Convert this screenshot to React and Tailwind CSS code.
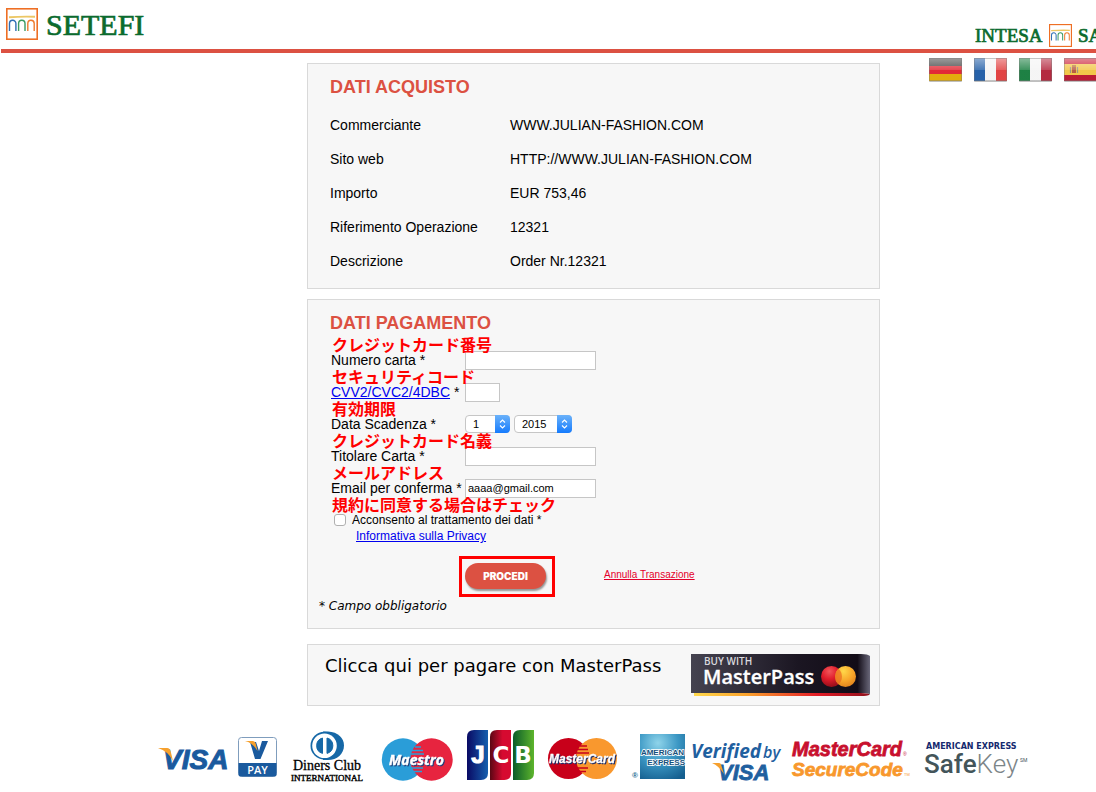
import React, { useState } from 'react';

const PURCHASE = [
  { label: 'Commerciante', value: 'WWW.JULIAN-FASHION.COM' },
  { label: 'Sito web', value: 'HTTP://WWW.JULIAN-FASHION.COM' },
  { label: 'Importo', value: 'EUR 753,46' },
  { label: 'Riferimento Operazione', value: '12321' },
  { label: 'Descrizione', value: 'Order Nr.12321' },
];

const MONTHS = ['1', '2', '3', '4', '5', '6', '7', '8', '9', '10', '11', '12'];
const YEARS = ['2015', '2016', '2017', '2018', '2019', '2020'];

const BridgeMark = ({ className }) => (
  <svg viewBox="0 0 32 32" className={className} fill="none" aria-hidden="true">
    <rect x="0.8" y="0.8" width="30.4" height="30.4" fill="#fff" stroke="#ee6f24" strokeWidth="1.6" />
    <path d="M3 9.2 Q16 8.4 29 8.8" stroke="#ecc765" strokeWidth="1.9" />
    <path d="M3.500 23 V15.500 A3.200 3.200 0 0 1 9.900 15.500 V23" stroke="#2f6fb5" strokeWidth="1.4" />
    <path d="M12.600 23 V15.500 A3.200 3.200 0 0 1 19 15.500 V23" stroke="#3d9a63" strokeWidth="1.4" />
    <path d="M21.800 23 V15.500 A3.200 3.200 0 0 1 28.200 15.500 V23" stroke="#ee7b2e" strokeWidth="1.4" />
  </svg>
);

const Flag = ({ name, stripes, vertical, children }) => (
  <a href="#" aria-label={name}>
    <svg width="33" height="24" viewBox="0 0 33 24" className="block">
      <defs>
        <linearGradient id={`gloss-${name}`} x1="0" y1="0" x2="0" y2="1">
          <stop offset="0" stopColor="#fff" stopOpacity="0.5" />
          <stop offset="0.5" stopColor="#fff" stopOpacity="0.2" />
          <stop offset="0.52" stopColor="#fff" stopOpacity="0.05" />
        </linearGradient>
      </defs>
      <rect x="0" y="1" width="33" height="23" rx="1" fill="#000" opacity="0.25" />
      {stripes.map((color, i) =>
        vertical ? (
          <rect key={i} x={i * 11} y="0" width="11" height="23" fill={color} />
        ) : (
          <rect key={i} x="0" y={i === 0 ? 0 : i === 1 ? 8 : 16} width="33" height={i === 2 ? 7 : 8} fill={color} />
        )
      )}
      {children}
      <rect width="33" height="23" fill={`url(#gloss-${name})`} />
      <rect x="0.5" y="0.5" width="32" height="22" fill="none" stroke="#777" strokeOpacity="0.4" />
    </svg>
  </a>
);

const Header = () => (
  <header>
    <div className="flex h-[49px] items-start justify-between pl-1.5 pr-3">
      <div className="flex items-center gap-2 pt-2">
        <BridgeMark className="size-8" />
        <svg width="108" height="32" viewBox="0 0 108 32" fill="#0b6b2e" stroke="#0b6b2e" strokeWidth="0.7" className="font-['Liberation_Serif',serif]">
          <text x="0" y="27" fontSize="30">SETEFI</text>
        </svg>
      </div>
      <div className="flex items-center gap-1.5 pt-6">
        <svg width="68" height="22" viewBox="0 0 68 22" fill="#0b6b2e" stroke="#0b6b2e" strokeWidth="0.7" className="font-['Liberation_Serif',serif]">
          <text x="0" y="17" fontSize="19">INTESA</text>
        </svg>
        <BridgeMark className="size-[23px]" />
        <svg width="97" height="22" viewBox="0 0 97 22" fill="#0b6b2e" stroke="#0b6b2e" strokeWidth="0.7" className="font-['Liberation_Serif',serif]">
          <text x="0" y="17" fontSize="19">SANPAOLO</text>
        </svg>
      </div>
    </div>
    <div className="ml-px h-1 bg-[#dc5142]" />
  </header>
);

const Languages = () => (
  <nav className="flex h-[10px] items-start justify-end gap-3 pr-[90px] pt-[5px]">
    <Flag name="Deutsch" stripes={['#3c3c3c', '#e0202c', '#e2a900']} />
    <Flag name="Français" vertical stripes={['#1c5aa5', '#f4f4f4', '#e03a3a']} />
    <Flag name="Italiano" vertical stripes={['#127a3a', '#f4f4f4', '#b01f36']} />
    <Flag name="Español" stripes={['#c8142c', '#f3c53a', '#b8102a']}>
      <rect y="6" width="33" height="11" fill="#f1c440" />
      <rect x="8" y="9" width="4" height="6" fill="#b5533a" />
      <path d="M6.500 9 V15 M13.500 9 V15" stroke="#9a8a80" strokeWidth="1.2" />
      <path d="M8 8 H12" stroke="#a4532e" strokeWidth="1.4" />
    </Flag>
  </nav>
);

const PanelTitle = ({ children }) => (
  <h2 className="text-[18px] leading-6 font-bold text-[#dc5142]">{children}</h2>
);

const Note = ({ children }) => (
  <span lang="ja" className="pointer-events-none absolute -top-2 left-px z-10 font-['Noto_Sans_CJK_JP',sans-serif] text-base leading-4 font-bold whitespace-nowrap text-[#ff0000]">
    {children}
  </span>
);

const Field = ({ note, label, htmlFor, children }) => (
  <div className="relative flex h-8 items-center">
    <Note>{note}</Note>
    <label htmlFor={htmlFor} className="w-[134px] shrink-0 text-sm leading-4 whitespace-nowrap">
      {label}
    </label>
    {children}
  </div>
);

const MacSelect = ({ id, label, options, className }) => (
  <div className={`relative h-[18px] ${className}`}>
    <select
      id={id}
      aria-label={label}
      className="block h-full w-full appearance-none rounded-[4px] border border-[#c6c6c6] bg-white pl-[7px] text-[11px] leading-4 text-black"
    >
      {options.map((o) => (
        <option key={o}>{o}</option>
      ))}
    </select>
    <svg width="15" height="18" viewBox="0 0 15 18" className="pointer-events-none absolute top-0 right-0" fill="none">
      <defs>
        <linearGradient id={`${id}-blue`} x1="0" y1="0" x2="0" y2="1">
          <stop offset="0" stopColor="#6bb2fa" />
          <stop offset="1" stopColor="#157bfd" />
        </linearGradient>
      </defs>
      <path d="M0 0 H11 Q15 0 15 4 V14 Q15 18 11 18 H0 Z" fill={`url(#${id}-blue)`} />
      <path d="M5 7.500 L7.500 5 L10 7.500 M5 10.500 L7.500 13 L10 10.500" stroke="#fff" strokeWidth="1.1" />
    </svg>
  </div>
);

const PurchasePanel = () => (
  <section className="border border-[#d9d9d9] bg-[#f7f7f7] pt-[11px] pb-2.5 pl-[22px]">
    <PanelTitle>DATI ACQUISTO</PanelTitle>
    <dl className="pt-[9px] text-sm">
      {PURCHASE.map((row) => (
        <div key={row.label} className="flex h-[34px] items-center">
          <dt className="w-[180px]">{row.label}</dt>
          <dd>{row.value}</dd>
        </div>
      ))}
    </dl>
  </section>
);

const PaymentPanel = () => {
  const [email, setEmail] = useState('aaaa@gmail.com');
  const [accepted, setAccepted] = useState(false);

  return (
    <section className="mt-2.5 border border-[#d9d9d9] bg-[#f7f7f7] pt-[11px] pb-[14px] pl-[22px]">
      <PanelTitle>DATI PAGAMENTO</PanelTitle>
      <form className="pt-[9px] pl-px" onSubmit={(e) => e.preventDefault()}>
        <Field note="クレジットカード番号" label="Numero carta *" htmlFor="card">
          <input id="card" type="text" className="h-[19px] w-[131px] border border-[#c6c6c6] bg-white px-0.5 text-[11px]" />
        </Field>
        <Field
          note="セキュリティコード"
          htmlFor="cvv"
          label={<><a href="#" className="text-[#0000ee] underline">CVV2/CVC2/4DBC</a> *</>}
        >
          <input id="cvv" type="text" className="h-[19px] w-[35px] border border-[#c6c6c6] bg-white px-0.5 text-[11px]" />
        </Field>
        <Field note="有効期限" label="Data Scadenza *" htmlFor="month">
          <div className="flex gap-1">
            <MacSelect id="month" options={MONTHS} className="w-[45px]" />
            <MacSelect id="year" label="Anno" options={YEARS} className="w-[58px]" />
          </div>
        </Field>
        <Field note="クレジットカード名義" label="Titolare Carta *" htmlFor="holder">
          <input id="holder" type="text" className="h-[19px] w-[131px] border border-[#c6c6c6] bg-white px-0.5 text-[11px]" />
        </Field>
        <Field note="メールアドレス" label="Email per conferma *" htmlFor="email">
          <input
            id="email"
            type="text"
            value={email}
            onChange={(e) => setEmail(e.target.value)}
            className="h-[19px] w-[131px] border border-[#c6c6c6] bg-white px-0.5 text-[11px]"
          />
        </Field>
        <div className="relative flex h-6 items-end gap-1.5 pl-[3px] text-xs leading-4">
          <Note>規約に同意する場合はチェック</Note>
          <input
            id="privacy"
            type="checkbox"
            checked={accepted}
            onChange={(e) => setAccepted(e.target.checked)}
            className="mb-0.5 size-3 appearance-none rounded-[3px] border border-[#b0b0b0] bg-white checked:bg-[#157bfd]"
          />
          <label htmlFor="privacy">Acconsento al trattamento dei dati *</label>
        </div>
        <a href="#" className="ml-[25px] block w-fit text-xs leading-4 text-[#0000ee] underline">
          Informativa sulla Privacy
        </a>
        <div className="mt-3 ml-32 flex items-center gap-[49px]">
          <div className="border-[3px] border-[#ff0000] pt-1 pr-1.5 pb-[5px] pl-[3px]">
            <button
              type="submit"
              className="block h-[26px] w-[81px] rounded-full bg-[#dc5142] text-center font-['Inter',sans-serif] text-[10px] font-black text-white shadow-[1px_2px_2px_rgba(0,0,0,0.4)]"
            >
              PROCEDI
            </button>
          </div>
          <a href="#" className="pb-1 text-[10px] leading-4 text-[#e4002b] underline">Annulla Transazione</a>
        </div>
      </form>
      <p className="-ml-[11px] pt-px font-['DejaVu_Sans',sans-serif] text-xs leading-4 italic">* Campo obbligatorio</p>
    </section>
  );
};

const MasterPassPanel = () => (
  <section className="mt-[15px] flex items-start justify-between border border-[#d9d9d9] bg-[#f7f7f7] pt-[9px] pr-[9px] pb-[9px] pl-[17px]">
    <p className="font-['DejaVu_Sans',sans-serif] text-[18px] leading-6">Clicca qui per pagare con MasterPass</p>
    <button type="button" aria-label="Buy with MasterPass">
      <svg width="179" height="42" viewBox="0 0 179 42" className="block">
        <defs>
          <linearGradient id="mp-dark">
            <stop offset="0" stopColor="#454350" />
            <stop offset="0.6" stopColor="#1b1622" />
            <stop offset="0.93" stopColor="#120c17" />
            <stop offset="1" stopColor="#696779" />
          </linearGradient>
          <linearGradient id="mp-line">
            <stop offset="0" stopColor="#ffd84d" />
            <stop offset="0.3" stopColor="#faa22c" />
            <stop offset="0.7" stopColor="#e31d28" />
            <stop offset="1" stopColor="#8f101c" />
          </linearGradient>
          <radialGradient id="mp-red" cx="0.4" cy="0.25" r="0.7">
            <stop offset="0" stopColor="#f2565a" />
            <stop offset="0.55" stopColor="#e01c2b" />
            <stop offset="1" stopColor="#a0101c" />
          </radialGradient>
          <radialGradient id="mp-yellow" cx="0.4" cy="0.25" r="0.8">
            <stop offset="0" stopColor="#ffd84a" />
            <stop offset="0.6" stopColor="#f8a429" />
            <stop offset="1" stopColor="#e0801c" />
          </radialGradient>
        </defs>
        <path d="M0 0 H170 Q177 0 179 2 V40 Q175 39 168 39 H0 Z" fill="url(#mp-dark)" />
        <path d="M3 39 H170 Q176 39 179 40.500 Q176 42 170 42 H3 Z" fill="url(#mp-line)" />
        <text x="13" y="11" fontSize="10" fontWeight="600" fill="#d9d9de" className="font-['Open_Sans',sans-serif]">BUY WITH</text>
        <text x="12" y="30" fontSize="20" fontWeight="600" fill="#fff" stroke="#fff" strokeWidth="0.3" className="font-['Open_Sans',sans-serif]">MasterPass</text>
        <circle cx="140.500" cy="22.500" r="10.500" fill="url(#mp-red)" />
        <circle cx="154.500" cy="22.500" r="10.500" fill="url(#mp-yellow)" />
        <path d="M147.500 14.700 A10.500 10.500 0 0 1 147.500 30.300 A10.500 10.500 0 0 1 147.500 14.700" fill="#e96a20" opacity="0.7" />
      </svg>
    </button>
  </section>
);

const CardLogos = () => (
  <footer className="mt-[22px] flex justify-center">
    {/* Visa */}
    <svg width="75" height="60" viewBox="0 0 75 60" className="font-['Liberation_Sans',sans-serif]">
      <text x="5" y="41" fontSize="28" fontWeight="700" fontStyle="italic" fill="#1a5a9e" stroke="#1a5a9e">VISA</text>
      <path d="M0 20 H9 Q12 20 12.800 24 L15 33 Q10 23 0 20 Z" fill="#f6a02d" />
    </svg>
    {/* V PAY */}
    <svg width="52" height="60" viewBox="0 0 52 60" className="font-['Open_Sans',sans-serif]">
      <rect x="5.500" y="9.500" width="38" height="39" rx="3" fill="#fff" stroke="#7f9dbd" />
      <path d="M5.500 35 H43.500 V46 Q43.500 48.500 41 48.500 H8 Q5.500 48.500 5.500 46 Z" fill="#1a5a9e" />
      <path d="M17 14 L22 31 H27.500 L35 13 H29 L26 23 L23 14 Z" fill="#1a5a9e" />
      <path d="M12 13 H20 Q22 13 22.800 16 L24.500 23 Q20 15 12 13 Z" fill="#f6a02d" />
      <text x="24.500" y="46" fontSize="11" fontWeight="600" textAnchor="middle" fill="#fff">PAY</text>
    </svg>
    {/* Diners Club */}
    <svg width="87" height="60" viewBox="0 0 87 60" className="font-['Liberation_Serif',serif]">
      <path d="M38 3.500 H43 C53 4 59 10 59 17.500 C59 26 52 32 43 32 H38 Z" fill="#1668a7" />
      <circle cx="39.500" cy="17.700" r="14" fill="#1668a7" />
      <circle cx="39.500" cy="17.700" r="12.300" fill="#fff" />
      <path d="M37.500 10 A8 8 0 0 0 37.500 25.400 Z" fill="#1668a7" stroke="#1668a7" />
      <path d="M42 10 A8 8 0 0 1 42 25.400 Z" fill="#1668a7" stroke="#1668a7" />
      <text x="42" y="42" fontSize="14" textAnchor="middle" stroke="#000" strokeWidth="0.3">Diners Club</text>
      <text x="42" y="53" fontSize="9" textAnchor="middle" stroke="#000" strokeWidth="0.4">INTERNATIONAL</text>
    </svg>
    {/* Maestro */}
    <svg width="88" height="60" viewBox="0 0 88 60" className="font-['Open_Sans',sans-serif]">
      <circle cx="31" cy="31.500" r="21.200" fill="#2a9dd8" />
      <circle cx="59.500" cy="31.500" r="21.200" fill="#e7243f" />
      <path d="M43 19 H49 M40 22.500 H51 M38.500 26 H52 M38 40 H51 M40 43.500 H50" stroke="#2a9dd8" strokeWidth="1.700" />
      <text x="44.500" y="37" fontSize="14" fontWeight="700" fontStyle="italic" textAnchor="middle" fill="#fff" stroke="#fff" strokeWidth="0.4" className="drop-shadow-[1px_1px_0_#1b3d78]">Maestro</text>
    </svg>
    {/* JCB */}
    <svg width="81" height="60" viewBox="0 0 81 60">
      <defs>
        <linearGradient id="jcb-blue"><stop offset="0" stopColor="#0a0a64" /><stop offset="1" stopColor="#155fae" /></linearGradient>
        <linearGradient id="jcb-red"><stop offset="0" stopColor="#5a0714" /><stop offset="0.6" stopColor="#d60a30" /><stop offset="1" stopColor="#d60a30" /></linearGradient>
        <linearGradient id="jcb-green"><stop offset="0" stopColor="#0b5c2a" /><stop offset="1" stopColor="#5db52c" /></linearGradient>
      </defs>
      <path d="M7 9 Q7 2 14 2 H28 V45 Q28 52 21 52 H7 Z" fill="url(#jcb-blue)" />
      <path d="M30 9 Q30 2 37 2 H51 V45 Q51 52 44 52 H30 Z" fill="url(#jcb-red)" />
      <path d="M53 9 Q53 2 60 2 H74 V45 Q74 52 67 52 H53 Z" fill="url(#jcb-green)" />
      <g fontWeight="700" fill="#fff" textAnchor="middle">
        <text x="18" y="35" fontSize="24" stroke="#fff" className="font-['Liberation_Sans',sans-serif]">J</text>
        <text x="41" y="35" fontSize="23" className="font-['DejaVu_Sans',sans-serif]">C</text>
        <text x="63" y="35" fontSize="23" className="font-['DejaVu_Sans',sans-serif]">B</text>
      </g>
    </svg>
    {/* MasterCard */}
    <svg width="84" height="60" viewBox="0 0 84 60" className="font-['Liberation_Sans',sans-serif]">
      <circle cx="27.500" cy="30.500" r="20.500" fill="#c8001a" />
      <circle cx="55.500" cy="30.500" r="20.500" fill="#f9982e" />
      <path d="M39 18 H46 M37 21.500 H47 M35.500 25 H48 M36 40 H47 M37 43.500 H45" stroke="#c8001a" strokeWidth="1.7" />
      <text x="41" y="35" fontSize="12" fontWeight="700" fontStyle="italic" textAnchor="middle" fill="#fff" stroke="#fff" strokeWidth="0.3" className="drop-shadow-[1px_1px_0_#1b2c68]">MasterCard</text>
    </svg>
    {/* American Express */}
    <svg width="63" height="60" viewBox="0 0 63 60" className="font-['Liberation_Sans',sans-serif]">
      <defs>
        <radialGradient id="amex" cx="0.4" cy="0.2" r="0.9">
          <stop offset="0" stopColor="#8fd4ea" />
          <stop offset="0.5" stopColor="#3b97c4" />
          <stop offset="1" stopColor="#155f8f" />
        </radialGradient>
      </defs>
      <rect x="15" y="6" width="45" height="45" fill="url(#amex)" />
      <g fontSize="8" fontWeight="700" fill="#14507c" stroke="#fff" strokeWidth="1.6" paintOrder="stroke" textAnchor="end">
        <text x="59" y="27">AMERICAN</text>
        <text x="60" y="37">EXPRESS</text>
      </g>
      <text x="7" y="50" fontSize="8" fontWeight="700" fill="#16688f">®</text>
    </svg>
    {/* Verified by Visa */}
    <svg width="98" height="60" viewBox="0 0 98 60" className="font-['Open_Sans',sans-serif]">
      <text x="3" y="30" fontSize="19" fontWeight="700" fontStyle="italic" fill="#1f609f">Verified</text>
      <text x="75" y="30" fontSize="16" fontWeight="600" fontStyle="italic" fill="#1f609f">by</text>
      <text x="30" y="52" fontSize="22" fontWeight="700" fontStyle="italic" fill="#1f609f" stroke="#1f609f" strokeWidth="0.8" className="font-['Liberation_Sans',sans-serif]">VISA</text>
      <path d="M24 35 H31 Q33 35 33.500 38 L36 46 Q31 38 24 35 Z" fill="#f6a02d" />
    </svg>
    {/* MasterCard SecureCode */}
    <svg width="130" height="60" viewBox="0 0 130 60" className="font-['Liberation_Sans',sans-serif]">
      <text x="6" y="28" fontSize="20" fontWeight="700" fontStyle="italic" fill="#c8102e" stroke="#c8102e" strokeWidth="0.8">MasterCard</text>
      <text x="117" y="28" fontSize="5" fill="#c8102e">®</text>
      <text x="6" y="48" fontSize="19" fontWeight="700" fontStyle="italic" fill="#f8982d" stroke="#f8982d" strokeWidth="0.8">SecureCode</text>
      <text x="118" y="48" fontSize="4" fill="#f8982d">TM</text>
    </svg>
    {/* American Express SafeKey */}
    <svg width="114" height="60" viewBox="0 0 114 60" className="font-['Roboto',sans-serif]">
      <text x="10" y="21" fontSize="8" fontWeight="700" fill="#14296e" className="font-['DejaVu_Sans',sans-serif]">AMERICAN EXPRESS</text>
      <text x="8" y="45" fontSize="26" fill="#43555a"><tspan fontWeight="500">Safe</tspan><tspan fontWeight="300" fill="#7c8588">Key</tspan></text>
      <text x="104" y="34" fontSize="5" fill="#43555a">SM</text>
    </svg>
  </footer>
);

export default function App() {
  return (
    <div className="min-h-screen overflow-hidden bg-white font-['Liberation_Sans',Arial,sans-serif] text-black">
      <div className="min-w-[1187px]">
        <Header />
        <Languages />
        <main className="mx-auto w-full max-w-[573px]">
          <PurchasePanel />
          <PaymentPanel />
          <MasterPassPanel />
        </main>
        <CardLogos />
      </div>
    </div>
  );
}
